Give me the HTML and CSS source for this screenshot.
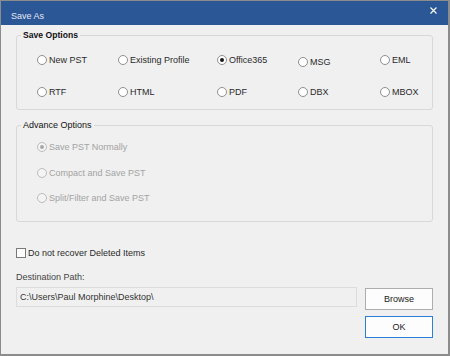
FILE: index.html
```html
<!DOCTYPE html>
<html>
<head>
<meta charset="utf-8">
<link rel="stylesheet" href="styles.css">
</head>
<body>
<div class="window">
  <div class="titlebar">
    <span class="title">Save As</span>
    <svg class="close" width="7" height="7" viewBox="0 0 7 7"><path d="M0.5 0.5L6.5 6.5M6.5 0.5L0.5 6.5" stroke="#fff" stroke-width="1.1" fill="none"/></svg>
  </div>
  <div class="content">
    <fieldset class="group save">
      <legend class="legend bold">Save Options</legend>
      <div class="grid">
        <label class="opt"><span class="radio"></span>New PST</label>
        <label class="opt"><span class="radio"></span>Existing Profile</label>
        <label class="opt"><span class="radio on"></span>Office365</label>
        <label class="opt low"><span class="radio"></span>MSG</label>
        <label class="opt"><span class="radio"></span>EML</label>
        <label class="opt"><span class="radio"></span>RTF</label>
        <label class="opt"><span class="radio"></span>HTML</label>
        <label class="opt"><span class="radio"></span>PDF</label>
        <label class="opt"><span class="radio"></span>DBX</label>
        <label class="opt"><span class="radio"></span>MBOX</label>
      </div>
    </fieldset>
    <fieldset class="group adv">
      <legend class="legend">Advance Options</legend>
      <div class="list">
        <label class="opt dis"><span class="radio on"></span>Save PST Normally</label>
        <label class="opt dis"><span class="radio"></span>Compact and Save PST</label>
        <label class="opt dis"><span class="radio"></span>Split/Filter and Save PST</label>
      </div>
    </fieldset>
    <label class="check-row"><span class="checkbox"></span>Do not recover Deleted Items</label>
    <div class="dest-label">Destination Path:</div>
    <div class="path-row">
      <div class="path">C:\Users\Paul Morphine\Desktop\</div>
      <div class="btn browse">Browse</div>
    </div>
    <div class="ok-row">
      <div class="btn ok">OK</div>
    </div>
  </div>
</div>
</body>
</html>
```
FILE: styles.css
```css
* { box-sizing: border-box; }
html, body { margin: 0; padding: 0; background: #ffffff; }
body { font-family: "Liberation Sans", Arial, sans-serif; font-size: 9px; color: #1a1a1a; }

.window {
  width: 450px;
  height: 356px;
  border: 1px solid #8c8c8c;
  border-right-width: 2px;
  border-bottom-width: 2px;
  background: #f0f0f0;
  display: flex;
  flex-direction: column;
}

.titlebar {
  height: 24px;
  background: #2b5797;
  display: flex;
  align-items: flex-start;
  padding: 9px 11px 0 10px;
}
.title { color: #e3e9f3; font-size: 9px; line-height: 12px; }
.close { margin-left: auto; margin-top: -3px; }

.content {
  display: flex;
  flex-direction: column;
  padding: 4px 15px 0 15px;
}

.group {
  margin: 0;
  border: 1px solid #d8d8d8;
  border-radius: 3px;
  min-width: 0;
  padding-left: 4px;
  padding-right: 0;
}
.legend {
  padding: 0 2px;
  margin-left: 0;
  line-height: 12px;
  color: #111;
}
.bold { font-weight: bold; font-size: 8.6px; }

.save { padding-top: 12px; padding-bottom: 10px; }
.grid {
  display: grid;
  grid-template-columns: 81px 99px 81px 82px 1fr;
  row-gap: 18px;
  padding-left: 16px;
}
.opt {
  display: flex;
  align-items: center;
  height: 14px;
  line-height: 14px;
  white-space: nowrap;
  color: #2a2a2a;
}
.low { transform: translateY(2px); }

.radio {
  width: 10px;
  height: 10px;
  border: 1px solid #8f8f8f;
  border-radius: 50%;
  background: #fff;
  margin-right: 2px;
  flex: none;
  display: flex;
  align-items: center;
  justify-content: center;
}
.radio.on::after {
  content: "";
  width: 4px;
  height: 4px;
  border-radius: 50%;
  background: #1a1a1a;
}

.adv { margin-top: 9px; padding-top: 9px; padding-bottom: 16px; }
.list { display: flex; flex-direction: column; gap: 11.5px; padding-left: 16px; }
.opt.dis { color: #a3a3a3; }
.opt.dis .radio { border-color: #bcbcbc; background: #f4f4f4; }
.opt.dis .radio.on::after { background: #a8a8a8; }

.check-row {
  margin-top: 24px;
  display: flex;
  align-items: center;
  height: 14px;
  color: #2a2a2a;
}
.checkbox {
  width: 10px;
  height: 10px;
  border: 1px solid #7a7a7a;
  background: #fff;
  margin-right: 2px;
}

.dest-label { margin-top: 10px; height: 14px; line-height: 14px; color: #444; }

.path-row { margin-top: 3px; display: flex; align-items: flex-start; }
.path {
  width: 341px;
  height: 20px;
  border: 1px solid #dcdcdc;
  background: #f0f0f0;
  padding-left: 3px;
  line-height: 18px;
  color: #333;
}
.btn {
  width: 68px;
  height: 22px;
  border: 1px solid #adadad;
  background: #fdfdfd;
  text-align: center;
  line-height: 20px;
  color: #222;
}
.browse { margin-left: 8px; margin-top: 1px; }
.ok-row { display: flex; justify-content: flex-end; margin-top: 6px; }
.ok { border-color: #2b7fd6; }
```
